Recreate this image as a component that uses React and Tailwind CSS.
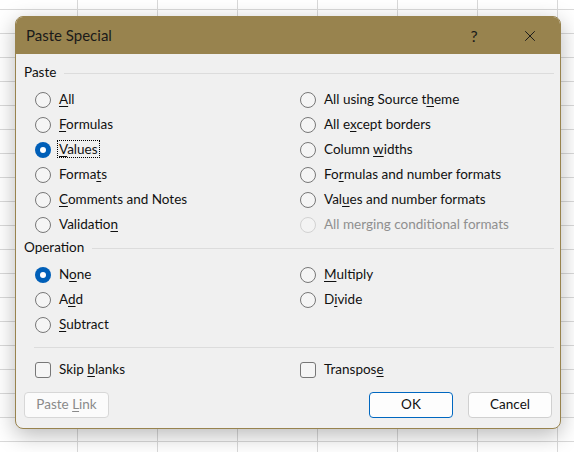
import { X } from "lucide-react";

const font = { fontFamily: 'Lato, "Noto Sans", sans-serif' };

// label with one access-key letter underlined
const Label = ({ text, u, focus }) => {
  const i = u ?? -1;
  const body =
    i < 0 ? (
      text
    ) : (
      <>
        {text.slice(0, i)}
        <span className="underline underline-offset-2">{text[i]}</span>
        {text.slice(i + 1)}
      </>
    );
  if (focus) {
    return <span className="outline outline-1 outline-dotted outline-black px-[1px] -mx-[1px]">{body}</span>;
  }
  return <span>{body}</span>;
};

const Radio = ({ text, u, checked, disabled, focus }) => (
  <div className="flex items-center h-[25px] gap-[8px]">
    {checked ? (
      <span className="w-[16px] h-[16px] rounded-full bg-[#005fb8] flex items-center justify-center shrink-0">
        <span className="w-[6px] h-[6px] rounded-full bg-white" />
      </span>
    ) : (
      <span
        className={
          disabled
            ? "w-[16px] h-[16px] rounded-full border border-[#d2d2d2] bg-[#f3f3f3] shrink-0"
            : "w-[16px] h-[16px] rounded-full border border-[#777] bg-[#f5f5f5] shrink-0"
        }
      />
    )}
    <span className={disabled ? "text-[#8f8f8f]" : "text-[#111]"}>
      <Label text={text} u={disabled ? undefined : u} focus={focus} />
    </span>
  </div>
);

const Check = ({ text, u }) => (
  <div className="flex items-center h-[25px] gap-[8px]">
    <span className="w-[16px] h-[16px] rounded-[3px] border border-[#777] bg-[#f5f5f5] shrink-0" />
    <span className="text-[#111]">
      <Label text={text} u={u} />
    </span>
  </div>
);

const Group = ({ title, className = "" }) => (
  <div className={"flex items-center h-[20px] gap-[8px] pl-[8px] pr-[6px] " + className}>
    <span className="text-[#111]">{title}</span>
    <div className="flex-1 h-px bg-[#dcdcdc]" />
  </div>
);

const pasteLeft = [
  { text: "All", u: 0 },
  { text: "Formulas", u: 0 },
  { text: "Values", u: 0, checked: true, focus: true },
  { text: "Formats", u: 5 },
  { text: "Comments and Notes", u: 0 },
  { text: "Validation", u: 9 },
];

const pasteRight = [
  { text: "All using Source theme", u: 18 },
  { text: "All except borders", u: 5 },
  { text: "Column widths", u: 7 },
  { text: "Formulas and number formats", u: 2 },
  { text: "Values and number formats", u: 3 },
  { text: "All merging conditional formats", disabled: true },
];

export default function App() {
  return (
    <div
      style={font}
      className="w-[574px] h-[452px] overflow-hidden bg-white bg-[linear-gradient(to_right,#d9d9d9_1px,transparent_1px),linear-gradient(to_bottom,#d9d9d9_1px,transparent_1px)] bg-[size:80px_24px] bg-[position:77px_9px] pt-[16px] pl-[15px] text-[13.5px] leading-none"
    >
      <div className="w-[546px] h-[413px] rounded-[8px] border border-[#98834e] bg-[#f0f0f0] shadow-[0_6px_22px_rgba(0,0,0,0.28)] overflow-hidden flex flex-col">
        <div className="h-[37px] bg-[#98834e] flex items-center pl-[10px] text-[#1a1a1a] shrink-0">
          <span className="text-[15px]">Paste Special</span>
          <span className="ml-auto w-[30px] text-center text-[16px] mr-[32px]">?</span>
          <X size={18} strokeWidth={1.3} className="mr-[21px]" />
        </div>
        <div className="flex flex-col pt-[9px] pb-[10px]">
          <Group title="Paste" />
          <div className="flex mt-[4px] pl-[19px]">
            <div className="w-[265px]">
              {pasteLeft.map((r) => (
                <Radio key={r.text} {...r} />
              ))}
            </div>
            <div>
              {pasteRight.map((r) => (
                <Radio key={r.text} {...r} />
              ))}
            </div>
          </div>
          <Group title="Operation" className="mt-[1px]" />
          <div className="flex mt-[4px] pl-[19px]">
            <div className="w-[265px]">
              <Radio text="None" u={1} checked />
              <Radio text="Add" u={1} />
              <Radio text="Subtract" u={0} />
            </div>
            <div>
              <Radio text="Multiply" u={0} />
              <Radio text="Divide" u={1} />
            </div>
          </div>
          <div className="h-px bg-[#dcdcdc] mt-[10px] ml-[18px] mr-[6px]" />
          <div className="flex mt-[9px] pl-[19px]">
            <div className="w-[265px]">
              <Check text="Skip blanks" u={5} />
            </div>
            <Check text="Transpose" u={8} />
          </div>
          <div className="flex items-center mt-[10px] px-[8px] gap-[15px]">
            <button className="w-[85px] h-[26px] rounded-[4px] border border-[#d7d7d7] bg-[#fbfbfb] text-[#8a8a8a]">
              <Label text="Paste Link" u={6} />
            </button>
            <button className="ml-auto w-[84px] h-[26px] rounded-[4px] border border-[#0067c0] bg-[#fdfdfd] text-[#111]">
              OK
            </button>
            <button className="w-[84px] h-[26px] rounded-[4px] border border-[#d0d0d0] bg-[#fdfdfd] text-[#111]">
              Cancel
            </button>
          </div>
        </div>
      </div>
    </div>
  );
}
